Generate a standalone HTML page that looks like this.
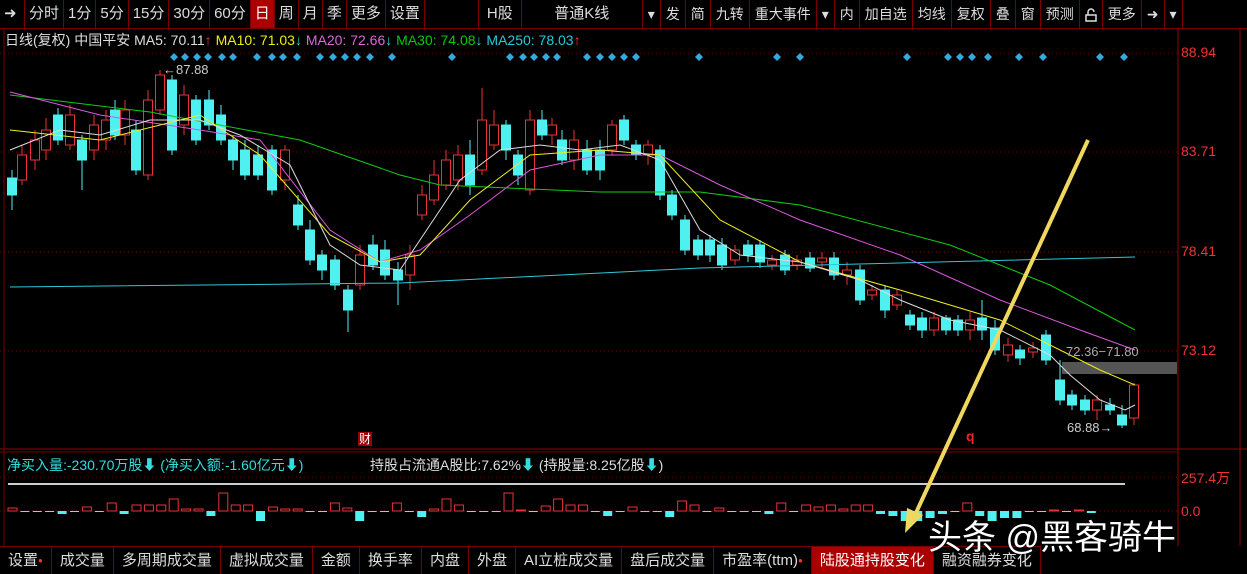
<!DOCTYPE html>
<html><head><meta charset="utf-8"><style>
body{margin:0;width:1247px;height:573px;background:#000;overflow:hidden;font-family:"Liberation Sans","Noto Sans CJK SC",sans-serif;position:relative}
.tb{position:absolute;left:0;top:0;width:1247px;height:28px;border-bottom:1px solid #7a0000;display:flex;font-size:15px;color:#ddd}
.tb span{border-right:1px solid #7a0000;padding:0 4px;line-height:28px;white-space:nowrap}
.tb .n{padding:0 5px;font-size:14px}
.bt{position:absolute;left:0;top:546px;height:27px;display:flex;font-size:15px;color:#ddd;border-top:1px solid #7a0000}
.bt span{border-right:1px solid #7a0000;padding:0 8px;line-height:27px;white-space:nowrap}
.d{color:#f33;font-size:8px;vertical-align:top;font-style:normal}
.t{position:absolute;white-space:nowrap}
</style></head><body>
<div class="tb">
<span style="width:16px">➜</span><span>分时</span><span>1分</span><span>5分</span><span>15分</span><span>30分</span><span>60分</span><span style="background:#a00;color:#fff">日</span><span>周</span><span>月</span><span>季</span><span>更多</span><span>设置</span><span style="width:45px"></span><span style="padding:0 8px">H股</span><span style="width:112px;text-align:center">普通K线</span><span class="n">▾</span><span class="n">发</span><span class="n">简</span><span class="n">九转</span><span class="n">重大事件</span><span class="n">▾</span><span class="n">内</span><span class="n">加自选</span><span class="n">均线</span><span class="n">复权</span><span class="n">叠</span><span class="n">窗</span><span class="n">预测</span><span class="n"><svg width="12" height="14" style="vertical-align:middle"><path d="M3 7V4a3 3 0 0 1 6 0" fill="none" stroke="#ddd" stroke-width="1.5"/><rect x="1" y="7" width="10" height="6" fill="none" stroke="#ddd" stroke-width="1.5"/></svg></span><span class="n">更多</span><span class="n">➜</span><span class="n">▾</span>
</div>
<div class="t" style="left:5px;top:30px;font-size:14px;color:#ddd">日线(复权) 中国平安 MA5: 70.11<span style="color:#f33">↑</span> <span style="color:#ee0">MA10: 71.03</span><span style="color:#3cc">↓</span> <span style="color:#d6d">MA20: 72.66</span><span style="color:#3cc">↓</span> <span style="color:#0c0">MA30: 74.08</span><span style="color:#3cc">↓</span> <span style="color:#2cd">MA250: 78.03</span><span style="color:#f33">↑</span></div>
<svg id="s" width="1247" height="573" style="position:absolute;left:0;top:0"></svg>
<div class="t" style="left:1181px;top:44px;color:#e33;font-size:14px">88.94</div>
<div class="t" style="left:1181px;top:143px;color:#e33;font-size:14px">83.71</div>
<div class="t" style="left:1181px;top:243px;color:#e33;font-size:14px">78.41</div>
<div class="t" style="left:1181px;top:342px;color:#e33;font-size:14px">73.12</div>
<div class="t" style="left:1181px;top:468px;color:#e33;font-size:14px">257.4万</div>
<div class="t" style="left:1181px;top:503px;color:#e33;font-size:14px">0.0</div>
<div class="t" style="left:163px;top:62px;color:#ccc;font-size:13px">←87.88</div>
<div class="t" style="left:1066px;top:344px;color:#aaa;font-size:13px">72.36−71.80</div>
<div class="t" style="left:1067px;top:420px;color:#ccc;font-size:13px">68.88→</div>
<div class="t" style="left:358px;top:432px;background:#900;color:#fff;font-size:12px;line-height:14px;padding:0 1px">财</div>
<div class="t" style="left:966px;top:428px;color:#e22;font-size:14px;font-weight:bold">q</div>
<div class="t" style="left:7px;top:455px;font-size:14px;color:#3dd">净买入量:-230.70万股⬇ (净买入额:-1.60亿元⬇)</div>
<div class="t" style="left:370px;top:455px;font-size:14px;color:#ddd">持股占流通A股比:7.62%<span style="color:#3dd">⬇</span> (持股量:8.25亿股<span style="color:#3dd">⬇</span>)</div>
<div class="bt">
<span>设置<i class="d">●</i></span><span>成交量</span><span>多周期成交量</span><span>虚拟成交量</span><span>金额</span><span>换手率</span><span>内盘</span><span>外盘</span><span>AI立桩成交量</span><span>盘后成交量</span><span>市盈率(ttm)<i class="d">●</i></span><span style="background:#a00;color:#fff">陆股通持股变化</span><span>融资融券变化</span>
</div>
<div class="t" style="left:928px;top:510px;color:#fff;font-size:34px;text-shadow:0 0 2px #000">头条 @黑客骑牛</div>
<script>
var s=document.getElementById('s'),h='';
[53,152,252,351].forEach(function(y){h+='<line x1="0" y1="'+y+'" x2="1178" y2="'+y+'" stroke="#700" stroke-dasharray="1,3"/>'});
h+='<line x1="0" y1="511" x2="1178" y2="511" stroke="#700" stroke-dasharray="1,3"/><line x1="0" y1="477" x2="1178" y2="477" stroke="#700" stroke-dasharray="1,3"/>';
h+='<line x1="1178" y1="28" x2="1178" y2="546" stroke="#900"/><line x1="1240" y1="28" x2="1240" y2="546" stroke="#900"/>';
h+='<line x1="0" y1="449" x2="1247" y2="449" stroke="#900"/><line x1="0" y1="452" x2="1178" y2="452" stroke="#700"/>';
h+='<line x1="4" y1="28" x2="4" y2="546" stroke="#700"/>';
h+='<rect x="1062" y="362" width="115" height="12" fill="#555"/>';
var C=[[12,'c',178,195,170,210],[22,'r',155,180,145,185],[35,'r',140,160,130,170],[46,'r',130,150,118,160],[58,'c',115,140,108,145],[70,'r',115,145,105,150],[82,'c',140,160,135,190],[94,'r',125,150,115,160],[106,'r',120,140,110,150],[115,'c',110,135,100,140],[125,'r',110,135,100,145],[136,'c',130,170,120,175],[148,'r',100,175,90,180],[160,'r',75,110,70,115],[172,'c',80,150,75,155],[184,'r',95,125,85,135],[196,'c',100,140,95,145],[209,'c',100,125,90,130],[221,'c',115,140,105,145],[233,'c',140,160,135,170],[245,'c',150,175,140,180],[258,'c',155,175,145,180],[272,'c',150,190,145,195],[285,'r',150,180,145,190],[298,'c',205,225,195,230],[310,'c',230,260,220,265],[322,'c',255,270,250,280],[335,'c',260,285,255,290],[348,'c',290,310,285,332],[360,'r',255,285,245,290],[373,'c',245,265,235,270],[385,'c',250,275,240,280],[398,'c',270,280,262,305],[410,'r',255,275,245,290],[422,'r',195,215,185,220],[434,'r',175,200,160,205],[446,'r',160,185,150,190],[458,'r',155,180,145,190],[470,'c',155,185,140,195],[482,'r',120,170,88,175],[494,'r',125,145,110,150],[506,'c',125,150,120,160],[518,'c',155,175,150,185],[530,'r',120,190,110,195],[542,'c',120,135,110,140],[552,'r',125,135,118,145],[562,'c',140,160,130,165],[574,'r',140,160,130,170],[587,'c',150,170,140,175],[600,'c',150,170,140,180],[612,'r',125,150,120,155],[624,'c',120,140,115,145],[636,'c',145,155,140,160],[648,'r',145,155,140,165],[660,'c',150,195,145,200],[672,'c',195,215,190,220],[685,'c',220,250,215,255],[698,'c',240,255,235,260],[710,'c',240,255,235,262],[722,'c',245,265,238,270],[735,'r',250,260,245,265],[748,'c',245,255,240,262],[760,'c',245,262,240,268],[772,'r',260,265,255,270],[785,'c',255,270,250,275],[797,'r',260,265,255,270],[810,'c',258,268,252,272],[822,'r',258,262,252,268],[834,'c',258,275,252,280],[847,'r',270,275,262,285],[860,'c',270,300,265,305],[872,'r',290,295,285,300],[885,'c',290,310,285,318],[897,'r',295,305,290,310],[910,'c',315,325,310,330],[922,'c',318,330,312,338],[934,'r',318,330,312,336],[946,'c',318,330,315,335],[958,'c',320,330,315,336],[970,'r',320,330,312,340],[982,'c',318,330,300,340],[995,'c',328,350,320,355],[1008,'r',345,355,338,362],[1020,'c',350,358,345,365],[1033,'r',348,352,342,358],[1046,'c',335,360,330,365],[1060,'c',380,400,360,405],[1072,'c',395,405,390,410],[1085,'c',400,410,395,415],[1097,'r',400,410,395,420],[1110,'c',405,410,398,415],[1122,'c',415,425,405,428],[1134,'r',385,418,383,425]];
C.forEach(function(c){var col=c[1]=='c'?'#4ef0f0':'#e8333a';h+='<line x1="'+c[0]+'" y1="'+c[4]+'" x2="'+c[0]+'" y2="'+c[5]+'" stroke="'+col+'"/>';
h+='<rect x="'+(c[0]-4.5)+'" y="'+c[2]+'" width="9" height="'+Math.max(1,c[3]-c[2])+'" fill="'+(c[1]=='c'?col:'#000')+'" stroke="'+col+'"/>'});
function P(p,col){h+='<polyline fill="none" stroke="'+col+'" stroke-width="1" points="'+p+'"/>'}
P('10,287 400,283 700,268 1135,257','#2cc8d8');
P('10,95 150,112 300,140 400,175 440,185 600,192 700,192 800,205 950,245 1050,285 1135,330','#1c1');
P('10,92 100,115 200,130 260,140 330,230 380,262 420,250 470,215 530,170 600,155 660,155 720,185 800,220 900,255 1000,300 1080,330 1135,350','#d5d');
P('10,130 100,140 200,115 260,155 330,235 380,262 420,255 470,200 530,155 600,150 660,155 720,220 800,262 900,290 1000,320 1060,350 1100,370 1135,385','#ee2');
P('10,150 60,130 100,135 150,120 200,120 240,135 290,165 330,245 360,265 400,270 430,225 460,180 500,150 540,145 580,150 620,145 660,160 700,230 740,255 800,262 860,280 900,300 950,320 1000,330 1050,355 1070,375 1100,400 1125,410 1135,405','#ddd');
[174,185,197,208,222,233,257,272,283,297,320,333,345,357,370,392,452,510,523,534,546,557,587,600,612,624,636,699,777,800,907,948,960,972,988,1019,1043,1100,1124].forEach(function(x){h+='<polygon points="'+x+',53 '+(x+4)+',57 '+x+',61 '+(x-4)+',57" fill="#3ad"/>'});
h+='<line x1="8" y1="484" x2="1125" y2="484" stroke="#ccc" stroke-width="2"/>';
var V=[3,-1,-1,-1,-3,-1,4,-1,8,-3,6,6,6,12,2,2,-5,18,6,6,-10,4,2,2,-1,-1,8,3,-10,-1,-1,8,-1,-6,2,12,6,-1,-1,-1,18,1,-1,5,12,6,6,-1,-5,-1,4,-1,-1,-6,10,6,-1,3,-1,-1,-1,-3,8,-1,6,4,6,2,6,6,-3,-5,-10,-10,-7,-3,-1,8,-5,-10,-7,-7,-1,-1,1,-1,1,-2];
V.forEach(function(v,i){var x=8+i*12.4,col=v>0?'#e8333a':'#4ef0f0',hh=Math.abs(v);
 if(v>0)h+='<rect x="'+x+'" y="'+(511-hh)+'" width="9" height="'+hh+'" fill="none" stroke="'+col+'"/>';else h+='<rect x="'+x+'" y="511" width="9" height="'+hh+'" fill="'+col+'"/>'});
h+='<line x1="1088" y1="140" x2="915" y2="515" stroke="#f0d860" stroke-width="4"/><polygon points="905,533 907,508 923,515" fill="#f0d860"/>';
s.innerHTML=h;
</script>
</body></html>
